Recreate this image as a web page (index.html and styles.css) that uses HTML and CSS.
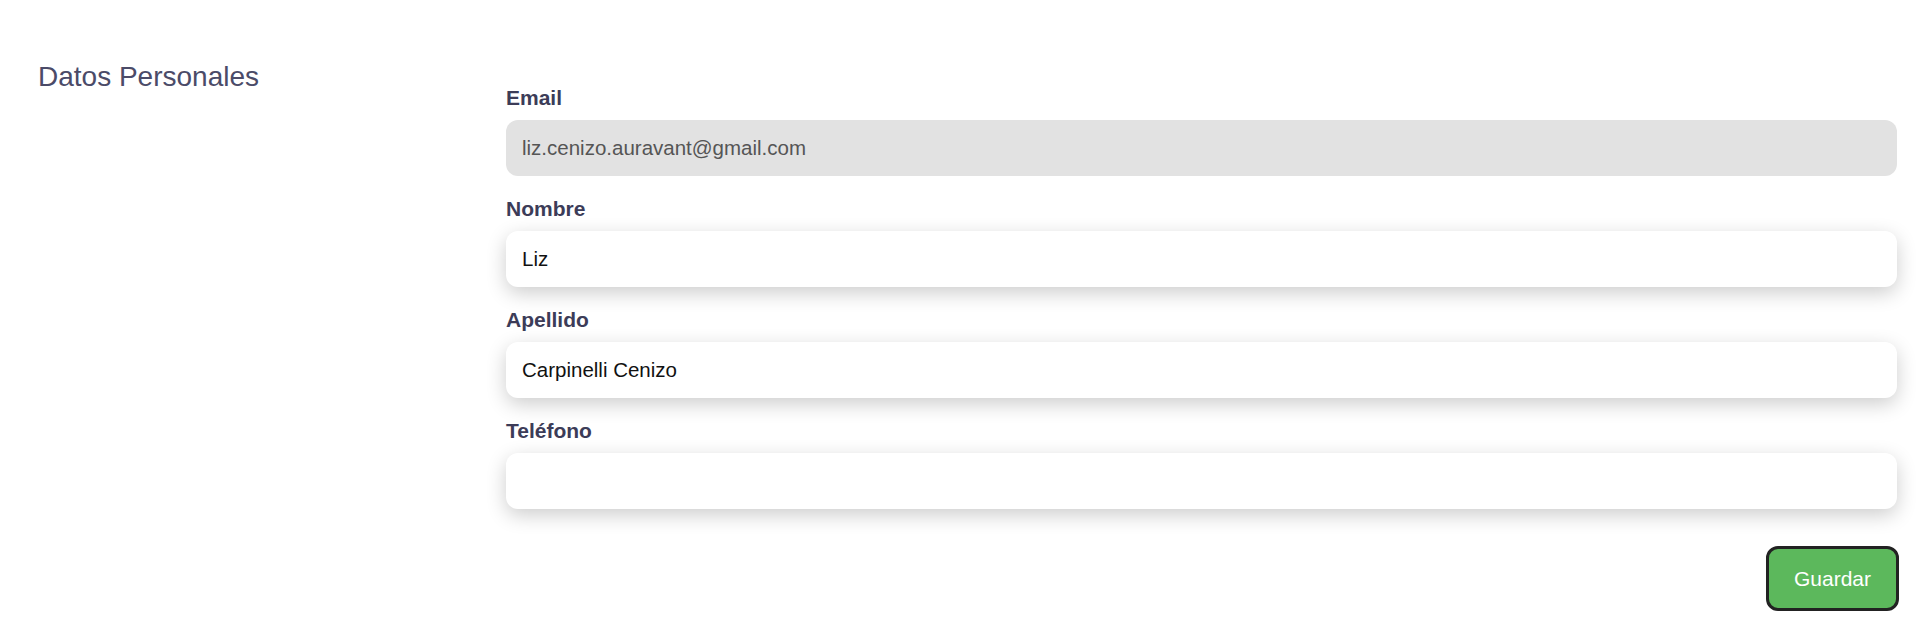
FILE: index.html
```html
<!DOCTYPE html>
<html lang="es">
<head>
    <meta charset="UTF-8">
    <title>Datos Personales</title>
    <link rel="stylesheet" href="styles.css">
</head>
<body>
<div id="container">
    <div id="side">
        <h2 class="section-title">Datos Personales</h2>
    </div>
    <form id="profile-form">
        <div class="field">
            <label for="email">Email</label>
            <input id="email" class="input disabled" type="text" value="liz.cenizo.auravant@gmail.com" disabled>
        </div>
        <div class="field">
            <label for="nombre">Nombre</label>
            <input id="nombre" class="input" type="text" value="Liz">
        </div>
        <div class="field">
            <label for="apellido">Apellido</label>
            <input id="apellido" class="input" type="text" value="Carpinelli Cenizo">
        </div>
        <div class="field">
            <label for="telefono">Teléfono</label>
            <input id="telefono" class="input" type="text" value="">
        </div>
        <div class="actions">
            <button type="button" class="btn-save">Guardar</button>
        </div>
    </form>
</div>
</body>
</html>
```

FILE: styles.css
```css
*{
    margin: 0;
    padding: 0;
    box-sizing: border-box;
}
body{
    background: #ffffff;
    font-family: "Liberation Sans", Arial, sans-serif;
}

#container{
    display: grid;
    grid-template-columns: 506px 1fr;
    padding-right: 23px;
}
#side{
    padding: 61px 0 0 38px;
}
.section-title{
    font-size: 28px;
    font-weight: normal;
    line-height: 32px;
    color: #4b4b68;
}

#profile-form{
    padding-top: 86px;
}
.field{
    display: flex;
    flex-direction: column;
    margin-bottom: 21px;
}
.field label{
    font-size: 21px;
    font-weight: bold;
    line-height: 24px;
    color: #3c3c58;
    margin-bottom: 10px;
}
.input{
    height: 56px;
    width: 100%;
    border: none;
    border-radius: 12px;
    padding: 0 16px;
    font-family: "Liberation Sans", Arial, sans-serif;
    font-size: 20.5px;
    color: #111111;
    background: #ffffff;
    box-shadow: 0 6px 20px rgba(0, 0, 0, 0.2);
    outline: none;
}
.input.disabled{
    background: #e2e2e2;
    color: #555555;
    box-shadow: none;
}

.actions{
    display: flex;
    justify-content: flex-end;
    margin-top: 37px;
    margin-right: -2px;
}
.btn-save{
    width: 133px;
    height: 65px;
    border: 3px solid #222222;
    border-radius: 12px;
    background: #5cb85c;
    color: #ffffff;
    font-family: "Liberation Sans", Arial, sans-serif;
    font-size: 21px;
    cursor: pointer;
}
```
